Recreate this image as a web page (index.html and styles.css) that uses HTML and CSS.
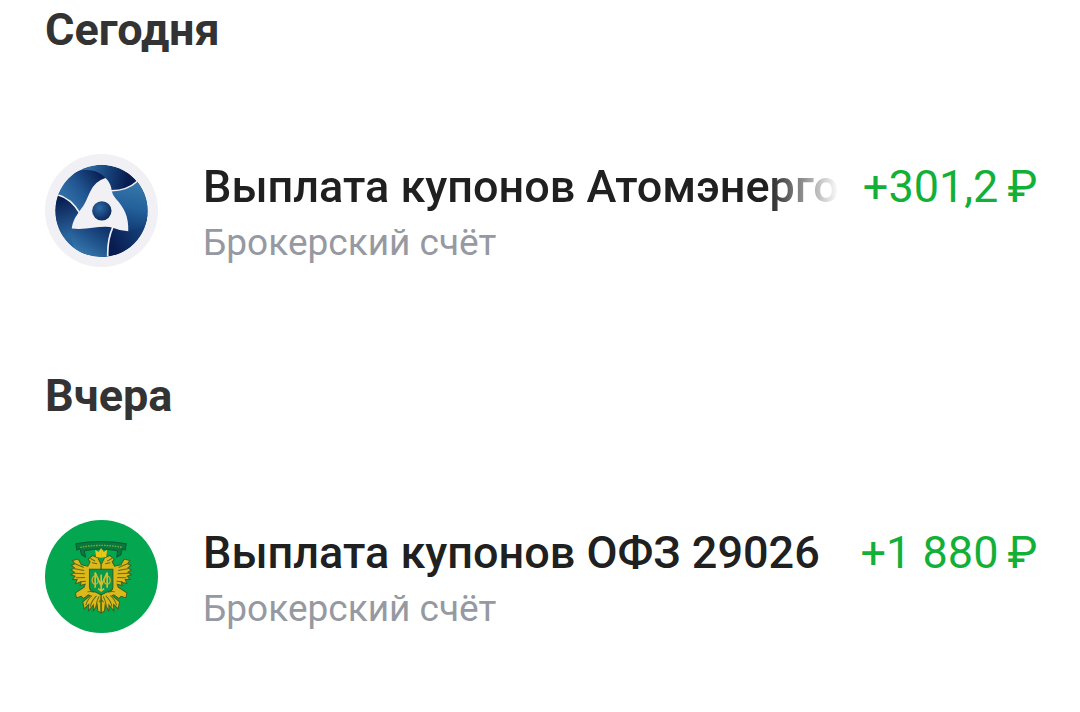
FILE: index.html
```
<!DOCTYPE html>
<html lang="ru">
    <head>
        <meta charset="utf-8">
        <meta name="viewport" content="width=device-width, initial-scale=1">
        <title>История операций</title>
        <link rel="stylesheet" href="styles.css">
    </head>
    <body>
        <main class="history">
            <section class="day">
                <h2 class="day-title">Сегодня</h2>
                <div class="operation">
                    <svg class="logo" viewBox="16 17 338 338" aria-hidden="true">
                        <defs>
                            <linearGradient id="blue-a" gradientUnits="userSpaceOnUse" x1="85" y1="150" x2="180" y2="82">
                                <stop offset="0" stop-color="#2e6ca5" />
                                <stop offset="0.4" stop-color="#215691" />
                                <stop offset="1" stop-color="#0b2357" />
                            </linearGradient>
                            <linearGradient id="blue-b" gradientUnits="userSpaceOnUse" x1="150" y1="70" x2="265" y2="85">
                                <stop offset="0" stop-color="#2c689f" />
                                <stop offset="0.45" stop-color="#17447c" />
                                <stop offset="1" stop-color="#081c50" />
                            </linearGradient>
                            <linearGradient id="blue-c" gradientUnits="userSpaceOnUse" x1="295" y1="115" x2="270" y2="245">
                                <stop offset="0" stop-color="#3474a8" />
                                <stop offset="0.5" stop-color="#24609b" />
                                <stop offset="1" stop-color="#123d75" />
                            </linearGradient>
                            <linearGradient id="blue-d" gradientUnits="userSpaceOnUse" x1="60" y1="150" x2="95" y2="260">
                                <stop offset="0" stop-color="#081c50" />
                                <stop offset="1" stop-color="#2a659e" />
                            </linearGradient>
                            <linearGradient id="blue-e" gradientUnits="userSpaceOnUse" x1="185" y1="240" x2="135" y2="315">
                                <stop offset="0" stop-color="#123770" />
                                <stop offset="1" stop-color="#3273aa" />
                            </linearGradient>
                            <linearGradient id="blue-f" gradientUnits="userSpaceOnUse" x1="215" y1="290" x2="315" y2="230">
                                <stop offset="0" stop-color="#081c50" />
                                <stop offset="1" stop-color="#17457f" />
                            </linearGradient>
                            <radialGradient id="core" cx="0.38" cy="0.35" r="0.7">
                                <stop offset="0" stop-color="#2b6aa5" />
                                <stop offset="1" stop-color="#0c2659" />
                            </radialGradient>
                            <clipPath id="disc"><circle cx="185" cy="187" r="138" /></clipPath>
                        </defs>
                        <circle cx="185" cy="186" r="169" fill="#f1f1f5" />
                        <g clip-path="url(#disc)">
                            <circle cx="185" cy="187" r="138" fill="url(#blue-b)" />
                            <path fill="url(#blue-f)" d="M190 200H340V340H190Z" />
                            <path fill="url(#blue-c)" d="M190 128H218Q262 126 292 98L340 120V205C315 230 295 246 264 246L190 210Z" />
                            <path fill="url(#blue-d)" d="M40 130L190 180L130 330H40Z" />
                            <path fill="url(#blue-a)" d="M40 140L52 138Q95 150 118 190L180 170L198 90C180 66 144 58 105 70L90 40H40Z" />
                            <path fill="url(#blue-e)" d="M95 230L221 238Q201 276 204 330H120Q88 280 95 230Z" />
                            <path fill="none" stroke="#f1f1f5" stroke-width="5" d="M212 127Q260 128 294 97M120 194Q95 150 52 138M219 236Q201 276 204 330" />
                        </g>
                        <path fill="#f1f1f5" d="M197 89Q210 101 214 118Q216 138 228 151C252 177 267 204 265 248Q242 247 221 238C185 228 145 246 96 240C99 217 108 204 119 188C137 167 141 151 151 130Q166 98 197 89Z" />
                        <circle cx="186" cy="187" r="29" fill="url(#core)" />
                    </svg>
                    <div class="details">
                        <h3 class="name name-long">Выплата купонов Атомэнерго</h3>
                        <p class="account">Брокерский счёт</p>
                    </div>
                    <p class="amount">+301,2&#8201;₽</p>
                </div>
            </section>
            <section class="day">
                <h2 class="day-title">Вчера</h2>
                <div class="operation">
                    <svg class="logo" viewBox="16 17 338 338" aria-hidden="true">
                        <circle cx="185" cy="186" r="169" fill="#05a650" />
                        <!-- ribbon -->
                        <path fill="#08783c" stroke="#075c33" stroke-width="3" d="M108 88Q183 74 259 88L256 107L247 103L243 121L231 128L233 109Q183 99 134 109L137 128L125 121L121 103L111 107Z" />
                        <path fill="none" stroke="#79a83d" stroke-width="4" stroke-dasharray="5 3" d="M121 99Q183 87 248 99" />
                        <!-- eagle, right half mirrors the left one -->
                        <defs>
                            <g id="eagle-half">
                                <path fill="#dcb81b" stroke="#3f6420" stroke-width="3" d="M184 150L174 130L158 123L145 135L151 142L144 155L125 151L115 134L98 138L105 148L95 152L104 160L94 166L104 173L94 181L106 185L98 195L112 195L107 207L124 203L121 213L136 209L133 218L107 235L110 250L124 245L131 252L146 241L151 243L129 262L133 283L147 270L146 289L161 271L160 291L172 270L174 289L184 295Z" />
                                <path fill="none" stroke="#5c6c1c" stroke-width="3" d="M104 147L132 159M101 162L133 168M102 176L135 178M109 190L136 189M120 202L138 200M143 232Q153 229 163 233M157 243Q143 253 138 272M170 244Q154 260 152 276M178 246Q168 263 169 282M152 132L166 140M157 145L172 148" />
                                <path fill="#edc61b" d="M169 128L166 106L176 113L184 101V130Z" />
                            </g>
                        </defs>
                        <use href="#eagle-half" />
                        <use href="#eagle-half" transform="translate(368 0) scale(-1 1)" />
                        <!-- shield with monogram -->
                        <path fill="#08994c" stroke="#256322" stroke-width="3" d="M149 164H219V218Q219 230 202 232L184 241L166 232Q149 230 149 218Z" />
                        <path fill="none" stroke="#d7bd31" stroke-width="5" d="M166 220V174L184 214L202 174V220M184 180V231M175 222L184 229L193 222" />
                        <ellipse cx="166" cy="197" rx="9" ry="12" fill="none" stroke="#cbb72d" stroke-width="4" />
                        <ellipse cx="202" cy="197" rx="9" ry="12" fill="none" stroke="#cbb72d" stroke-width="4" />
                        <path fill="none" stroke="#4d6a1d" stroke-width="3" d="M184 249V290M177 263L184 254L191 263" />
                    </svg>
                    <div class="details">
                        <h3 class="name">Выплата купонов ОФЗ 29026</h3>
                        <p class="account">Брокерский счёт</p>
                    </div>
                    <p class="amount">+1 880&#8201;₽</p>
                </div>
            </section>
        </main>
    </body>
</html>
```
FILE: styles.css
```
:root {
    --logo-size: 113px;
    --side: 45px;
}

body {
    margin: 0;
    background: #fff;
    font-family: Roboto, "Noto Sans", sans-serif;
}

h2, h3, p {
    margin: 0;
}

.history {
    display: grid;
    gap: 97px;
    padding: 2px 46px 80px var(--side);
}

.day {
    display: grid;
    gap: 96px;
}

.day-title {
    color: #333;
    font-size: 45px;
    line-height: 56px;
    font-weight: 700;
}

.operation {
    display: flex;
    align-items: flex-start;
}

.logo {
    flex: none;
    width: var(--logo-size);
    height: var(--logo-size);
    margin-right: 45px;
}

.details {
    flex: 1;
    min-width: 0;
    padding-top: 5px;
}

.name {
    overflow: hidden;
    color: #202020;
    font-size: 45px;
    line-height: 56px;
    font-weight: 500;
    white-space: nowrap;
}

/** fade out names that do not fit */
.name-long {
    -webkit-mask-image: linear-gradient(to left, transparent, #000 72px);
    mask-image: linear-gradient(to left, transparent, #000 72px);
}

.account {
    color: #9699a1;
    font-size: 37px;
    line-height: 56px;
}

.amount {
    flex: none;
    margin-left: 24px;
    padding-top: 5px;
    color: #13b038;
    font-size: 45px;
    line-height: 56px;
    white-space: nowrap;
}
```
